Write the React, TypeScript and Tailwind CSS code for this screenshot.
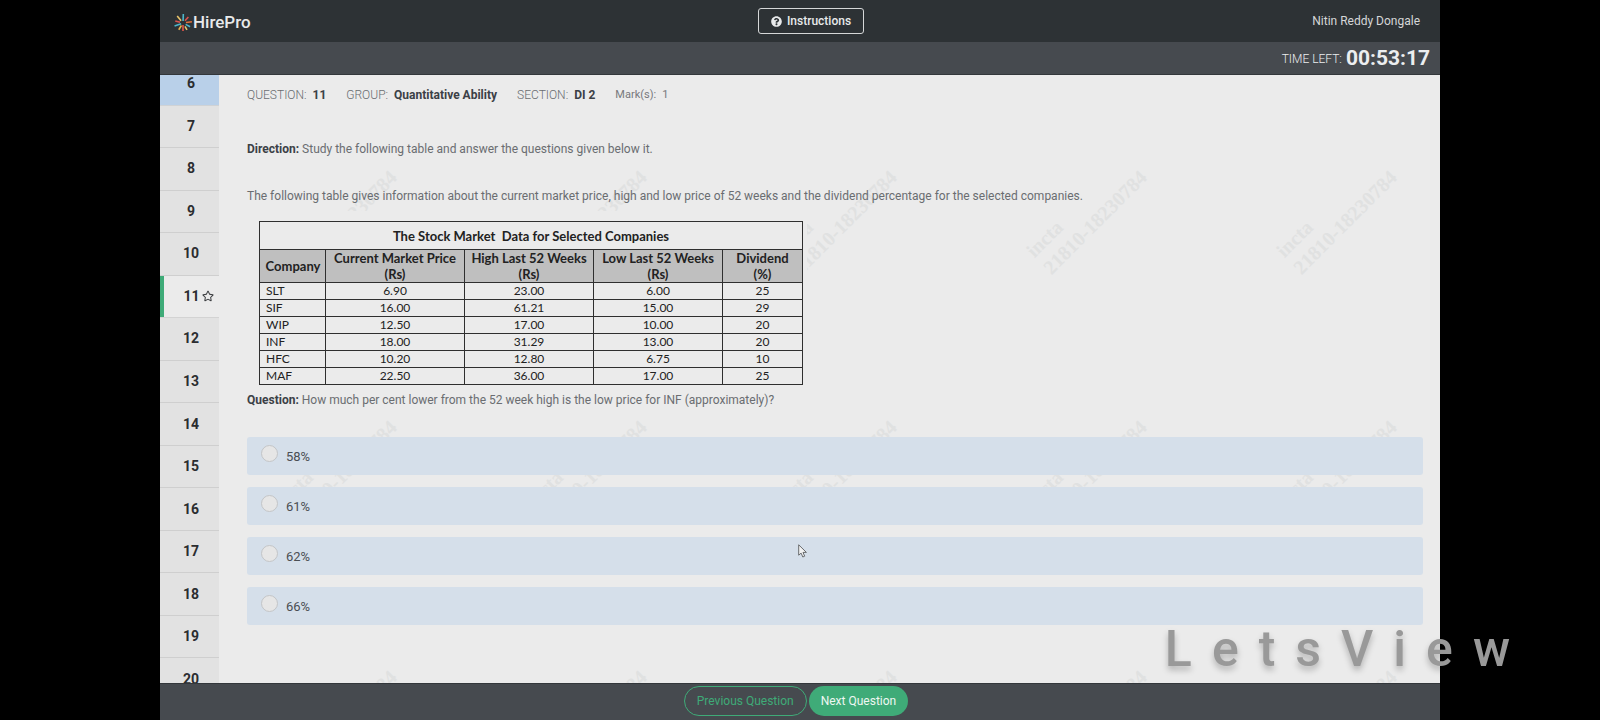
import { FaQuestionCircle, FaRegStar } from "react-icons/fa";

const questionNumbers = [6, 7, 8, 9, 10, 11, 12, 13, 14, 15, 16, 17, 18, 19, 20];
const currentQuestion = 11;

const stockRows = [
  ["SLT", "6.90", "23.00", "6.00", "25"],
  ["SIF", "16.00", "61.21", "15.00", "29"],
  ["WIP", "12.50", "17.00", "10.00", "20"],
  ["INF", "18.00", "31.29", "13.00", "20"],
  ["HFC", "10.20", "12.80", "6.75", "10"],
  ["MAF", "22.50", "36.00", "17.00", "25"],
];

const stockHeads = [
  ["Current Market Price", "(Rs)"],
  ["High Last 52 Weeks", "(Rs)"],
  ["Low Last 52 Weeks", "(Rs)"],
  ["Dividend", "(%)"],
];

const options = ["58%", "61%", "62%", "66%"];

const logoRays = [
  { angle: -8, color: "#e2703a", from: 3, to: 9 },
  { angle: 28, color: "#4cb5c9", from: 3, to: 8 },
  { angle: 60, color: "#e9c46a", from: 4, to: 8 },
  { angle: 90, color: "#e2564a", from: 2, to: 8 },
  { angle: 122, color: "#e9b44c", from: 3, to: 8 },
  { angle: 160, color: "#4cb5c9", from: 2, to: 9 },
  { angle: 195, color: "#d9534f", from: 3, to: 8 },
  { angle: 230, color: "#e9c46a", from: 3, to: 9 },
  { angle: 272, color: "#4cb5c9", from: 2, to: 9 },
  { angle: 312, color: "#d9534f", from: 3, to: 8 },
];

function LogoMark() {
  return (
    <svg className="size-[18px]" viewBox="0 0 18 18" aria-hidden="true">
      {logoRays.map((ray) => (
        <line
          key={ray.angle}
          x1={9 + ray.from}
          y1="9"
          x2={9 + ray.to}
          y2="9"
          stroke={ray.color}
          strokeWidth="1.6"
          transform={`rotate(${ray.angle} 9 9)`}
        />
      ))}
    </svg>
  );
}

function Header() {
  return (
    <header className="grid h-[42px] shrink-0 grid-cols-[1fr_auto_1fr] items-center bg-[#2d3235] pr-5 pl-[14px] text-[#e8eaeb]">
      <div className="flex items-center pt-1 text-[17px] font-medium">
        <LogoMark />
        <span className="pl-px">HirePro</span>
      </div>
      <button
        type="button"
        className="ml-7 flex h-[26px] w-[106px] items-center justify-center gap-[5px] rounded-[3px] border border-[#d5d7d8] text-[12px] font-medium"
      >
        <FaQuestionCircle className="size-[11px]" />
        Instructions
      </button>
      <div className="text-right text-[12px] text-[#d5d7d8]">Nitin Reddy Dongale</div>
    </header>
  );
}

function Watermark() {
  return (
    <div
      aria-hidden="true"
      className="absolute inset-0 flex flex-wrap content-start overflow-hidden pt-[75px] font-['Liberation_Serif',serif] text-[20px] leading-[24px] font-bold text-[#e0e1e1] select-none"
    >
      {Array.from({ length: 15 }, (_, i) => (
        <div key={i} className="relative size-[250px]">
          <div className="absolute top-[95px] left-[111px] origin-top-left -rotate-45 whitespace-nowrap">
            incta
            <br />
            21810-18230784
          </div>
        </div>
      ))}
    </div>
  );
}

function QuestionNav() {
  return (
    <nav aria-label="Questions" className="relative w-[59px] shrink-0 overflow-hidden bg-[#e2e2e2]">
      <ul className="-mt-3 grid h-[638px] auto-rows-fr">
        {questionNumbers.map((n) => (
          <li
            key={n}
            className={
              n === 6
                ? "border-b border-[#cfd2d5] bg-[#b9d0e9]"
                : n === currentQuestion
                  ? "border-b border-[#d3d3d3] bg-[#ebebeb]"
                  : "border-b border-[#cfcfcf]"
            }
          >
            <button
              type="button"
              className={
                n === currentQuestion
                  ? "grid h-full w-full grid-cols-[1fr_auto_1fr] items-center border-l-4 border-[#3fab78] text-[14px] font-bold text-[#2b2d30]"
                  : "grid h-full w-full grid-cols-[1fr_auto_1fr] items-center pl-[3px] text-[14px] font-bold text-[#2b2d30]"
              }
            >
              <span />
              <span className="px-[2px]">{n}</span>
              {n === currentQuestion && <FaRegStar className="size-[12px] text-[#3b3d40]" />}
            </button>
          </li>
        ))}
      </ul>
    </nav>
  );
}

function StockTable() {
  return (
    <div className="mt-[5px] w-[560px] bg-[#ebebeb] pt-[10px] pr-1 pl-[12px]">
      <table className="w-full table-fixed border-collapse border border-[#2f2f2f] font-[Lato,sans-serif] text-[12px] leading-[16px] text-[#222]">
        <colgroup>
          <col className="w-[66px]" />
          <col className="w-[139px]" />
          <col className="w-[129px]" />
          <col className="w-[129px]" />
          <col />
        </colgroup>
        <thead className="text-[13px]">
          <tr>
            <th colSpan={5} className="h-[28px] border border-[#2f2f2f] p-0 font-bold">
              The Stock Market&nbsp; Data for Selected Companies
            </th>
          </tr>
          <tr className="bg-[#bfbfbf]">
            <th scope="col" className="border border-[#2f2f2f] p-0 pl-px font-bold">
              Company
            </th>
            {stockHeads.map(([name, unit]) => (
              <th key={name} scope="col" className="border border-[#2f2f2f] p-0 font-bold">
                {name}
                <br />
                {unit}
              </th>
            ))}
          </tr>
        </thead>
        <tbody>
          {stockRows.map(([company, ...values]) => (
            <tr key={company}>
              <td className="border border-[#2f2f2f] p-0 pl-[6px]">{company}</td>
              {values.map((value, i) => (
                <td key={i} className="border border-[#2f2f2f] p-0 text-center">
                  {value}
                </td>
              ))}
            </tr>
          ))}
        </tbody>
      </table>
    </div>
  );
}

function MetaLine() {
  return (
    <dl className="flex items-center gap-5 text-[12px] leading-[20px]">
      <div className="flex gap-[6px]">
        <dt className="font-light">QUESTION:</dt>
        <dd className="font-bold text-[#3b4046]">11</dd>
      </div>
      <div className="flex gap-[6px]">
        <dt className="font-light">GROUP:</dt>
        <dd className="font-bold text-[#3b4046]">Quantitative Ability</dd>
      </div>
      <div className="flex gap-[6px]">
        <dt className="font-light">SECTION:</dt>
        <dd className="font-bold text-[#3b4046]">DI 2</dd>
      </div>
      <div className="flex gap-[6px] text-[11px] text-[#77797c]">
        <dt>Mark(s):</dt>
        <dd>1</dd>
      </div>
    </dl>
  );
}

function Options() {
  return (
    <fieldset className="mt-[27px] flex flex-col gap-3">
      <legend className="sr-only">Answer</legend>
      {options.map((option) => (
        <label
          key={option}
          className="flex h-[38px] items-start gap-2 rounded-[3px] bg-[#d5dfea] pt-2 pl-[14px] text-[13px] leading-[24px] text-[#4a4e53]"
        >
          <input
            type="radio"
            name="answer"
            className="size-[17px] appearance-none rounded-full border border-[#c3c5c7] bg-[#e6e6e6] checked:bg-[#3fab78]"
          />
          {option}
        </label>
      ))}
    </fieldset>
  );
}

export default function App() {
  return (
    <div className="relative min-h-screen bg-black font-[Roboto,sans-serif]">
      <div className="mx-auto flex h-screen w-4/5 flex-col overflow-hidden">
        <Header />
        <div className="flex h-[33px] shrink-0 items-center justify-end gap-1 border-b border-[#33373b] bg-[#464a4f] pt-[2px] pr-[10px] text-[#eceef0]">
          <span className="text-[12px] font-light">TIME LEFT:</span>
          <span className="text-[21px] font-bold">00:53:17</span>
        </div>

        <div className="relative flex min-h-0 grow bg-[#ebebeb]">
          <Watermark />
          <QuestionNav />
          <main className="relative grow overflow-hidden pt-[10px] pr-[17px] pl-7 text-[12px] leading-[20px] text-[#6a6d71]">
            <MetaLine />
            <p className="mt-[34px]">
              <b className="font-bold text-[#3b4046]">Direction:</b> Study the following table and answer the questions
              given below it.
            </p>
            <p className="mt-[27px]">
              The following table gives information about the current market price, high and low price of 52 weeks and
              the dividend percentage for the selected companies.
            </p>
            <StockTable />
            <p className="mt-[5px]">
              <b className="font-bold text-[#3b4046]">Question:</b> How much per cent lower from the 52 week high is
              the low price for INF (approximately)?
            </p>
            <Options />
            <svg
              className="absolute top-[469px] left-[579px] h-[14px] w-[10px]"
              viewBox="0 0 10 14"
              aria-hidden="true"
            >
              <path
                d="M.7.8v10.4l2.4-2.1 1.7 3.9 1.9-.8-1.7-3.8h3.4z"
                fill="#f2f2f2"
                stroke="#5b5d60"
                strokeWidth=".9"
              />
            </svg>
          </main>
        </div>

        <footer className="flex h-[37px] shrink-0 items-start justify-center gap-[2px] border-t border-[#33373b] bg-[#464a4f] pt-[2px] pr-2 text-[12px]">
          <button type="button" className="h-[30px] rounded-full border border-[#3fab78] px-3 text-[#3fab78]">
            Previous Question
          </button>
          <button type="button" className="h-[30px] rounded-full bg-[#3fab78] px-3 text-[#eef7f2]">
            Next Question
          </button>
        </footer>
      </div>

      <div
        aria-label="LetsView"
        className="pointer-events-none absolute right-[90px] bottom-[41px] flex gap-5 text-[50px] leading-[60px] font-medium text-[#999] [text-shadow:0_4px_6px_rgb(0_0_0/0.25)]"
      >
        {Array.from("LetsView", (letter, i) => (
          <span key={i}>{letter}</span>
        ))}
      </div>
    </div>
  );
}
